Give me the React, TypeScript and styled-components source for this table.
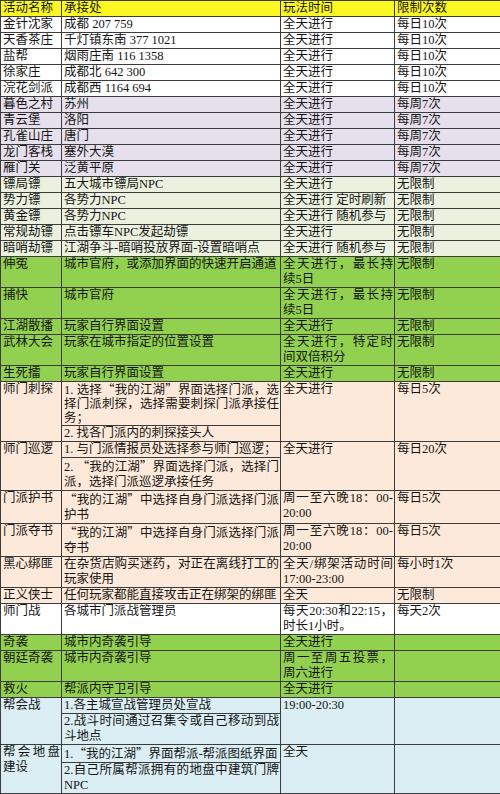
import { Fragment } from "react";
import styled, { createGlobalStyle } from "styled-components";

type Tone = "head" | "white" | "lavender" | "pale" | "green" | "peach" | "blue";

interface Activity {
  name: string;
  place: string | string[];
  time: string;
  limit: string;
  tone: Tone;
  tight?: boolean;
}

const toneColors: Record<Tone, string> = {
  head: "#fbf722",
  white: "#ffffff",
  lavender: "#e5e0ec",
  pale: "#ebf1de",
  green: "#92d050",
  peach: "#fde9d9",
  blue: "#daeef3",
};

// 活动数据
const activities: Activity[] = [
  { name: "金针沈家", place: "成都 207 759", time: "全天进行", limit: "每日10次", tone: "white" },
  { name: "天香茶庄", place: "千灯镇东南 377 1021", time: "全天进行", limit: "每日10次", tone: "white" },
  { name: "盐帮", place: "烟雨庄南 116 1358", time: "全天进行", limit: "每日10次", tone: "white" },
  { name: "徐家庄", place: "成都北 642 300", time: "全天进行", limit: "每日10次", tone: "white" },
  { name: "浣花剑派", place: "成都西 1164 694", time: "全天进行", limit: "每日10次", tone: "white" },
  { name: "暮色之村", place: "苏州", time: "全天进行", limit: "每周7次", tone: "lavender" },
  { name: "青云堡", place: "洛阳", time: "全天进行", limit: "每周7次", tone: "lavender" },
  { name: "孔雀山庄", place: "唐门", time: "全天进行", limit: "每周7次", tone: "lavender" },
  { name: "龙门客栈", place: "塞外大漠", time: "全天进行", limit: "每周7次", tone: "lavender" },
  { name: "雁门关", place: "泛黄平原", time: "全天进行", limit: "每周7次", tone: "lavender" },
  { name: "镖局镖", place: "五大城市镖局NPC", time: "全天进行", limit: "无限制", tone: "pale" },
  { name: "势力镖", place: "各势力NPC", time: "全天进行 定时刷新", limit: "无限制", tone: "pale" },
  { name: "黄金镖", place: "各势力NPC", time: "全天进行 随机参与", limit: "无限制", tone: "pale" },
  { name: "常规劫镖", place: "点击镖车NPC发起劫镖", time: "全天进行", limit: "无限制", tone: "pale" },
  { name: "暗哨劫镖", place: "江湖争斗-暗哨投放界面-设置暗哨点", time: "全天进行 随机参与", limit: "无限制", tone: "pale" },
  { name: "伸冤", place: "城市官府，或添加界面的快速开启通道", time: "全天进行，最长持续5日", limit: "无限制", tone: "green" },
  { name: "捕快", place: "城市官府", time: "全天进行，最长持续5日", limit: "无限制", tone: "green" },
  { name: "江湖散播", place: "玩家自行界面设置", time: "全天进行", limit: "无限制", tone: "green" },
  { name: "武林大会", place: "玩家在城市指定的位置设置", time: "全天进行，特定时间双倍积分", limit: "无限制", tone: "green" },
  { name: "生死擂", place: "玩家自行界面设置", time: "全天进行", limit: "无限制", tone: "green" },
  {
    name: "师门刺探",
    place: ["1. 选择“我的江湖”界面选择门派，选择门派刺探，选择需要刺探门派承接任务；", "2. 找各门派内的刺探接头人"],
    time: "全天进行",
    limit: "每日5次",
    tone: "peach",
    tight: true,
  },
  {
    name: "师门巡逻",
    place: ["1. 与门派情报员处选择参与师门巡逻；", "2. “我的江湖”界面选择门派，选择门派，选择门派巡逻承接任务"],
    time: "全天进行",
    limit: "每日20次",
    tone: "peach",
  },
  { name: "门派护书", place: "“我的江湖”中选择自身门派选择门派护书", time: "周一至六晚18：00-\u200b20:00", limit: "每日5次", tone: "peach" },
  { name: "门派夺书", place: "“我的江湖”中选择自身门派选择门派夺书", time: "周一至六晚18：00-\u200b20:00", limit: "每日5次", tone: "peach" },
  { name: "黑心绑匪", place: "在杂货店购买迷药，对正在离线打工的玩家使用", time: "全天/绑架活动时间17:00-23:00", limit: "每小时1次", tone: "peach" },
  { name: "正义侠士", place: "任何玩家都能直接攻击正在绑架的绑匪", time: "全天", limit: "无限制", tone: "peach" },
  { name: "师门战", place: "各城市门派战管理员", time: "每天20:30和22:15，时长1小时。", limit: "每天2次", tone: "white" },
  { name: "奇袭", place: "城市内奇袭引导", time: "全天进行", limit: "", tone: "green" },
  { name: "朝廷奇袭", place: "城市内奇袭引导", time: "周一至周五投票，周六进行", limit: "", tone: "green" },
  { name: "救火", place: "帮派内守卫引导", time: "全天进行", limit: "", tone: "green" },
  {
    name: "帮会战",
    place: ["1.各主城宣战管理员处宣战", "2.战斗时间通过召集令或自己移动到战斗地点"],
    time: "19:00-20:30",
    limit: "",
    tone: "blue",
  },
  {
    name: "帮会地盘建设",
    place: ["1.“我的江湖”界面帮派-帮派图纸界面", "2.自己所属帮派拥有的地盘中建筑门牌NPC"],
    time: "全天",
    limit: "",
    tone: "blue",
  },
];

// 中文引号用全角字形
const renderText = (text: string) =>
  text.split(/([“”])/).map((part, i) =>
    part === "“" || part === "”" ? <Quote key={i}>{part}</Quote> : <Fragment key={i}>{part}</Fragment>
  );

const App = () => {
  return (
    <>
      <GlobalStyle />
      <Sheet lang="zh-CN">
        <colgroup>
          <col style={{ width: 61 }} />
          <col style={{ width: 219 }} />
          <col style={{ width: 114 }} />
          <col style={{ width: 106 }} />
        </colgroup>
        <tbody>
          <Row $tone="head">
            <Cell>活动名称</Cell>
            <Cell>承接处</Cell>
            <Cell>玩法时间</Cell>
            <Cell>限制次数</Cell>
          </Row>
          {activities.map((item) => {
            if (Array.isArray(item.place)) {
              return (
                <Fragment key={item.name}>
                  <Row $tone={item.tone}>
                    <Cell rowSpan={2}>{item.name}</Cell>
                    <Cell $tight={item.tight}>{renderText(item.place[0])}</Cell>
                    <Cell rowSpan={2}>{item.time}</Cell>
                    <Cell rowSpan={2}>{item.limit}</Cell>
                  </Row>
                  <Row $tone={item.tone}>
                    <Cell>{renderText(item.place[1])}</Cell>
                  </Row>
                </Fragment>
              );
            }
            return (
              <Row key={item.name} $tone={item.tone}>
                <Cell>{item.name}</Cell>
                <Cell>{renderText(item.place)}</Cell>
                <Cell>{item.time}</Cell>
                <Cell>{item.limit}</Cell>
              </Row>
            );
          })}
        </tbody>
      </Sheet>
    </>
  );
};

const GlobalStyle = createGlobalStyle`
  html, body {
    margin: 0;
    padding: 0;
    background: #ffffff;
  }
`;

const Sheet = styled.table`
  width: 500px;
  table-layout: fixed;
  border-collapse: collapse;
  font-family: "Liberation Serif", "Noto Sans CJK SC", serif;
  font-size: 12.5px;
  line-height: 15px;
  color: #151515;
`;

const Row = styled.tr<{ $tone: Tone }>`
  background-color: ${(props) => toneColors[props.$tone]};
`;

const Cell = styled.td<{ $tight?: boolean }>`
  border: 1px solid #3c3c3c;
  padding: 0 1px 0 2px;
  vertical-align: top;
  text-align: justify;
  line-height: ${(props) => (props.$tight ? "14px" : "15px")};
`;

const Quote = styled.span`
  font-family: "Noto Sans CJK SC", sans-serif;
`;

export default App;
